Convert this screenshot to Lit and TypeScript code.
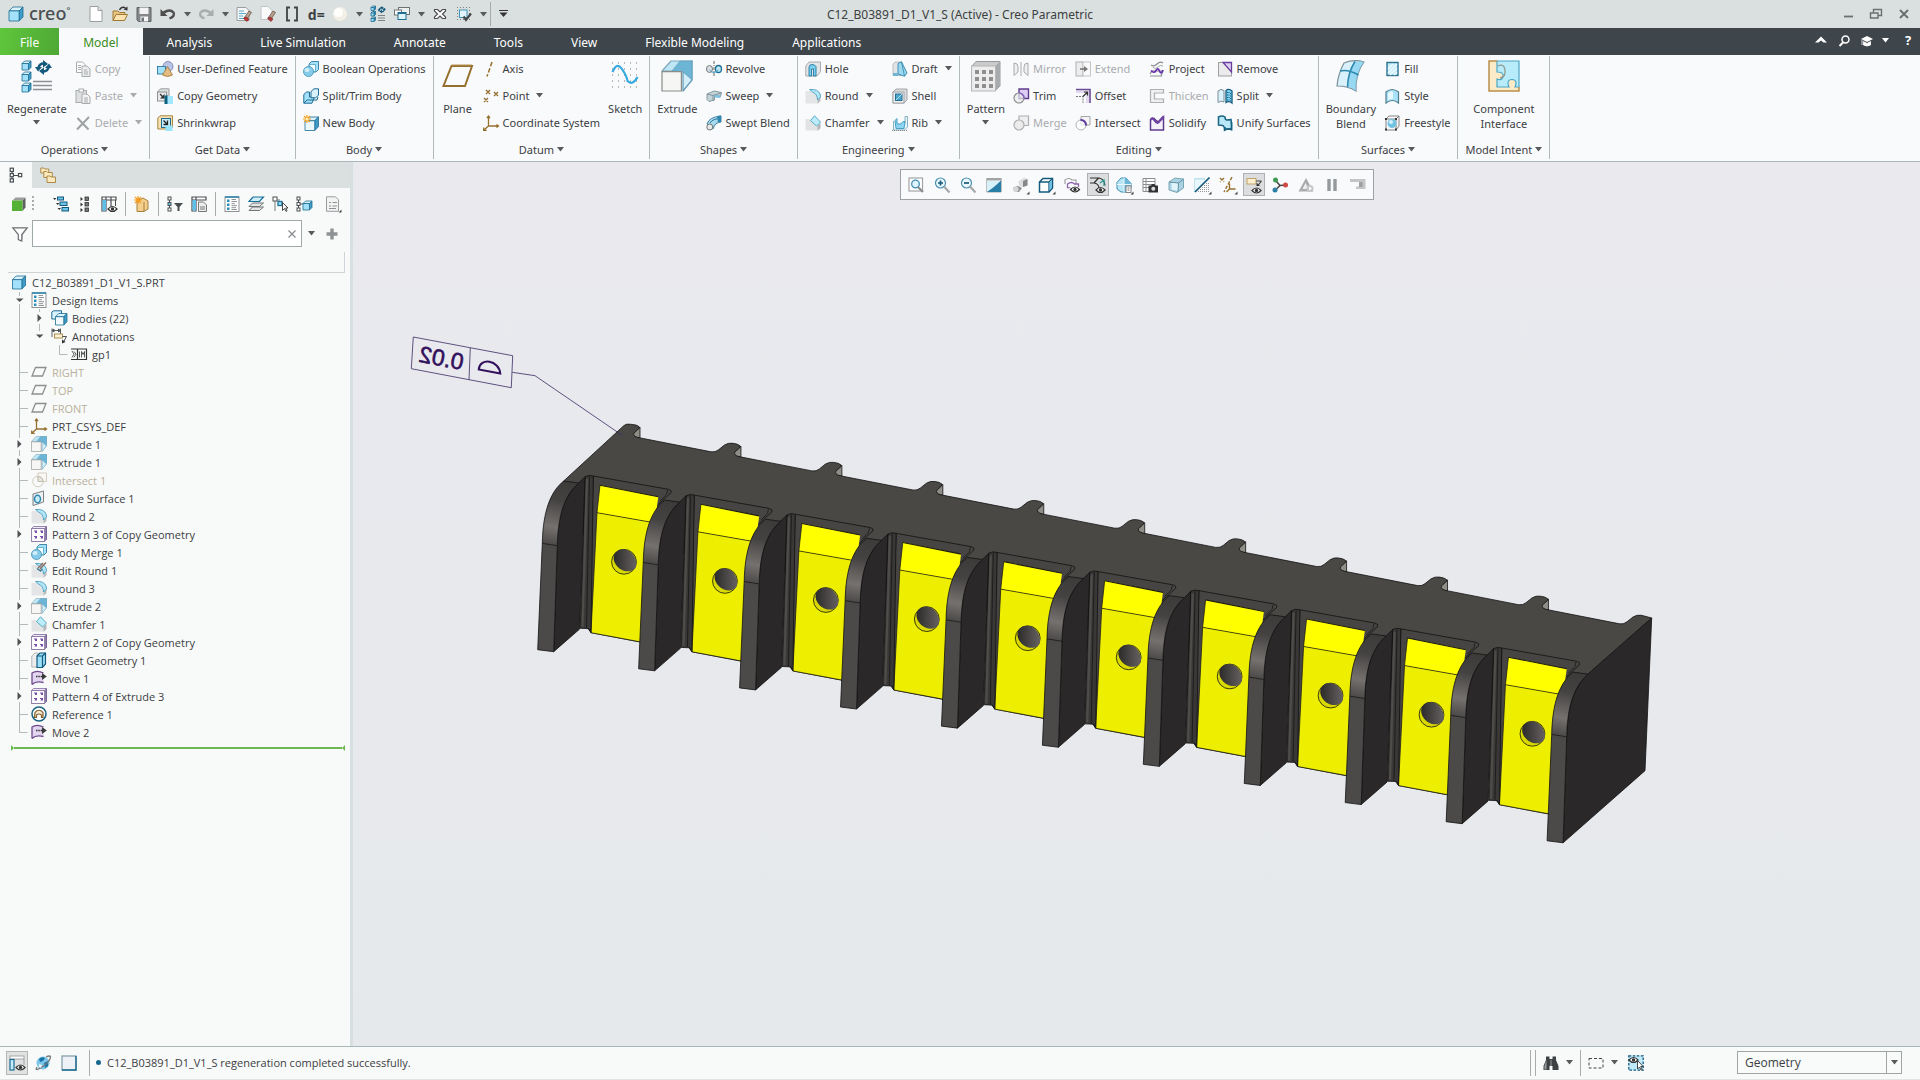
import { LitElement, html, svg, css, nothing, type TemplateResult, type SVGTemplateResult } from "lit";
import { customElement } from "lit/decorators.js";
import { classMap } from "lit/directives/class-map.js";

type Art = SVGTemplateResult;

/* ---------- icon palette ---------- */
const INK = "#4a4f52";
const EDGE = "#1c6c93";
const SKY = "#a3e0fa";
const PALE = "#d8f1fb";
const BROWN = "#96702e";

/** Small three-faced box seen from the front left. */
const box = (x: number, y: number, s: number, face = SKY, edge = EDGE, top = PALE, side = "#3f9cc6"): Art => {
  const d = Math.max(1.5, s * 0.28);
  return svg`<g stroke=${edge} stroke-width="0.8" stroke-linejoin="round">
    <path fill=${top} d="M${x} ${y + d}l${d} ${-d}h${s - d}l${-d} ${d}z"/>
    <path fill=${side} d="M${x + s - d} ${y + d}l${d} ${-d}v${s - d}l${-d} ${d}z"/>
    <rect fill=${face} x=${x} y=${y + d} width=${s - d} height=${s - d}/></g>`;
};

const eye = (x: number, y: number): Art => svg`<g transform="translate(${x} ${y})">
  <path d="M0 3q4.5-5 9 0q-4.5 5-9 0z" fill="#fff" stroke="#333" stroke-width="1.2"/><circle cx="4.5" cy="3" r="1.7" fill="#333"/></g>`;

const extrudeArt = (k: number): Art => svg`<g transform="scale(${k})" stroke-width="0.6" stroke-linejoin="round">
  <path d="M.5 5.5 5 .5h10.5L11 5.5z" fill="#bfe6f5" stroke="#7fa9ba"/>
  <path d="M11 5.5 15.500.5v9.5L11 15.5z" fill="#d3eef8" stroke="#5d9ab5"/>
  <path d="M5.5 5.500 9.500.5h6v9.500L11 6z" fill="#6db5d5" stroke="#5d9ab5" stroke-width=".3"/>
  <rect x=".5" y="5.8" width="9.7" height="9.7" fill="#f6f6f4" stroke="#8b8b88"/></g>`;

const roundArt = svg`<path d="M.5 3h6q6 1 6 8v4.500H.5z" fill="#e4e5e6"/>
  <path d="M12.500 9l3-3v7l-3 3z" fill="#b9bcbe"/>
  <path d="M4.500 1.500h4q7 1 7 7.500l-3 3q0-6-5-8z" fill="#b3e6f8" stroke="#3c99bd" stroke-width=".8"/>`;

const chamferArt = svg`<path d="M.5 4h4l8 7v4.500H.5z" fill="#e2e3e4"/><path d="M12.500 10.500l3-2.500v5l-3 3z" fill="#b2b5b7"/>
  <path d="M5.500 5.500 9.500.8l6 6.200-4 4z" fill="#bdecfb" stroke="#3c99bd" stroke-width=".8"/>`;

const patternArt = svg`<path d="M.5 2.500 2.500.5h13v13l-2 2" fill="#ece8f2" stroke="#9a86b5"/>
  <rect x=".6" y="2.5" width="13" height="13" fill="#fff" stroke="#85719f" stroke-width=".9"/>
  <path d="M15 .5v13.500" stroke="#6e568c" stroke-width="1.4"/>
  <g fill="#7a4fae"><rect x="3" y="4.5" width="3" height="2.5"/><rect x="9" y="4.5" width="3" height="2.5"/><rect x="3" y="10" width="3" height="2.5"/><rect x="9" y="10" width="3" height="2.5"/></g>
  <g fill="#fff"><rect x="3" y="5.5" width="1" height="1.5"/><rect x="9" y="5.5" width="1" height="1.5"/><rect x="3" y="11" width="1" height="1.5"/><rect x="9" y="11" width="1" height="1.5"/></g>`;

const csysArt = svg`<g fill="none" stroke=${BROWN} stroke-width="1.3"><path d="M5.500 1.500v9.500H15M5.500 11 1 15M4 3l1.500-2L7 3M13.500 9.500 15.500 11l-2 1.500M.7 12.500V15.300h3"/></g>`;

const mergeBodies = svg`<path d="M6 3 8.500.5h7v8L13 11H6z" fill=${SKY} stroke=${EDGE} stroke-width=".8"/><path d="M6.500 3.500h6V10.500h-6z" fill="#f4fbfe" stroke="#3c99bd" stroke-width=".7"/>
  <circle cx="5.5" cy="10.5" r="5" fill="#86cbe9" stroke="#3c8fb5" stroke-width=".8"/><ellipse cx="4" cy="9" rx="2.5" ry="2" fill="#d3eef9"/>`;

const listArt = svg`<rect x="1" y="1" width="14" height="14.5" fill="#fff" stroke="#8d9193"/><path d="M1 1h14" stroke="#2f86ad" stroke-width="1.6"/>
  <g fill="#2a8fbd"><rect x="3" y="3.5" width="2.5" height="2.5"/><rect x="3" y="7.5" width="2.5" height="2.5"/><rect x="3" y="11.5" width="2.5" height="2.5"/></g>
  <path d="M7.500 3.500H12M7.500 5.500H13M7.500 7.700H11M7.500 9.700H13M7.500 11.700H12M7.500 13.500H13" stroke="#85898b" stroke-width=".9"/>`;

const moveArt = svg`<path d="M1 3.500Q6 0 12.500 3.500V12Q6 10 1 14.500z" fill="#e3d5f0"/>
  <path d="M1 14.500V3Q6-.3 12.500 3M1 14.500Q5 10.500 12.500 12.500" fill="none" stroke="#6d4a8c" stroke-width="1.3"/>
  <path d="M5 6.500h6" stroke="#333" stroke-width="1.6" stroke-dasharray="1.5 .8"/><path d="M11 3 15.800 6.500 11 10z" fill="#3b3b3b"/>`;

const planeGrey = svg`<path d="M4.500 3.500h10.500L11.500 12H1z" fill="none" stroke="#8c8f90" stroke-width="1.3"/>`;

const swirl = (s: number, x: number, y: number): Art => svg`<g transform="translate(${x} ${y}) scale(${s})" fill="none" stroke="#15597d" stroke-width="2.6">
  <path d="M3.500 8A5 4.500 0 0 1 9 3.500M13.500 7A5 4.500 0 0 1 8 11.500"/><path d="M8 0 13 4 8 7.500zM9 15 4 11 9 7.500z" fill="#15597d" stroke="none"/><path d="M0 7h7L3 11.500zM17 8h-7L14 3.500z" fill="#15597d" stroke="none"/></g>`;

const I: Record<string, Art> = {
  /* quick access */
  new: svg`<path d="M2 .5h8l4 4v11H2z" fill="#fff" stroke="#9a9d9f"/><path d="M10 .5v4h4" fill="#dfe2e3" stroke="#9a9d9f"/>`,
  open: svg`<path d="M1 14.500V5h5l1.500 1.500H13V9" fill="#e9c583" stroke="#a07a35"/><path d="M1 14.500 4 8.500h11.500l-3 6z" fill="#fbe2ae" stroke="#a07a35"/><path d="M7.500 4q2-4 6-2" fill="none" stroke="#333" stroke-width="1.5"/><path d="M11.500 3.500 15.500 4.500V.5z" fill="#333"/>`,
  save: svg`<path d="M1 1.500h14v14H2.500L1 14z" fill="#85888a" stroke="#5e6163"/><rect x="3.5" y="1.5" width="9" height="6.5" fill="#f2f2f2"/><rect x="4.5" y="10.5" width="7.5" height="5" fill="#f7f7f7"/><rect x="5.5" y="11.5" width="2.5" height="4" fill="#707375"/>`,
  undo: svg`<path d="M2.500 7.500q7-5.500 11-1 2 3.500-4 6" fill="none" stroke="#4d4d4d" stroke-width="2.4"/><path d="M.5 3v7h7z" fill="#4d4d4d"/>`,
  redo: svg`<path d="M13.500 7.500q-7-5.500-11-1-2 3.500 4 6" fill="none" stroke="#a9adae" stroke-width="2.4"/><path d="M15.500 3v7h-7z" fill="#a9adae"/>`,
  regen: svg`<path d="M1 1.500h9l3 3v10H1z" fill="#f4f6f7" stroke="#9a9d9f"/><path d="M3 5h5M3 7.500h7M3 10h4M3 12.500h5" stroke="#5aa9cf" stroke-width="1.2"/><path d="M8 12 13 5l2.500 1.500L11 13z" fill="#b9a08e" stroke="#5d4a40" stroke-width=".7"/><path d="M7.500 12.500 11 15.500 13 13l-3-2z" fill="#c03636" stroke="#7d2020" stroke-width=".6"/>`,
  erase: svg`<path d="M1 .5h7l4 4v9H1z" fill="#fafafa" stroke="#c2c5c6"/><path d="M8 12 13 5l2.500 1.500L11 13z" fill="#b9a08e" stroke="#5d4a40" stroke-width=".7"/><path d="M7.500 12.500 11 15.500 13 13l-3-2z" fill="#b23a3a" stroke="#7d2020" stroke-width=".6"/>`,
  brackets: svg`<path d="M6 1.500H3v13h3M10 1.500h3v13h-3" fill="none" stroke="#3f4346" stroke-width="1.8"/>`,
  sphere: svg`<circle cx="8" cy="8" r="7" fill="#f2efe6"/><circle cx="6.5" cy="6.5" r="4.5" fill="#fffefa"/>`,
  regenTree: svg`${box(1, 0, 4.5)}${box(1, 5.5, 4.5)}${box(1, 11, 4.5)}${swirl(0.5, 7.5, 0)}<path d="M8 9.500h7M8 12h7M8 14.500h7" stroke="#7f8385"/>`,
  windows: svg`<rect x="4.5" y="1.5" width="11" height="7" fill="#eef0f0" stroke="#6f7375"/><rect x=".5" y="4" width="7" height="5" fill="#fff" stroke="#6f7375"/><rect x="4" y="6.5" width="8" height="7" fill="#dff3fb" stroke="#1c6c93"/><path d="M4 7h8" stroke="#1c6c93" stroke-width="2"/>`,
  closeWin: svg`<path d="M2.500 3.500h3L8 6l2.500-2.500h3v1.500L10.500 8l3 3v1.500h-3L8 10l-2.500 2.500h-3V11l3-3-3-3z" fill="#fff" stroke="#4c4f51" stroke-width="1.2"/>`,
  pick: svg`<path d="M1 1.500h15M1 4.500h15M1 7.500h15M1 10.500h15M1 13.500h15" stroke="#7d8183" stroke-dasharray="1 2"/><rect x="3.5" y="4" width="7.5" height="7.5" fill="#e2f5fd" stroke="#3d94b8"/><path d="M7.500 10.500 10 14l5-6.500" fill="none" stroke="#46494b" stroke-width="2.2"/>`,
  cube: box(1, 1, 14),
  /* ribbon, large */
  Regenerate: svg`${box(1, 1, 9)}${box(1, 12, 9)}${box(1, 23, 9)}${swirl(1, 14, 0)}<path d="M12 21.500h19M12 25.500h19M12 29.500h19" stroke="#8d9092" stroke-width="1.6"/>`,
  Plane: svg`<path d="M9.500 6h20.500L23 26H1.500z" fill="none" stroke=${BROWN} stroke-width="2"/><path d="M9.500 5h20.500" stroke="#b59252"/>`,
  Sketch: svg`<g stroke="#777" stroke-width="1" stroke-dasharray="1 5"><path d="M3 3h26M3 9h26M3 15h26M3 21h26M3 27h26"/></g><path d="M3.500 12Q8 1.500 13 9t5.500 12q5 5 10-4" fill="none" stroke="#33a9df" stroke-width="2.2"/>`,
  Extrude: extrudeArt(2),
  Pattern: svg`<path d="M2 6 6 1.500h24V26l-5 5" fill="#c9cbcc" stroke="#999"/><path d="M25.500 6 30 1.500V26l-4.500 5z" fill="#a8abad"/><rect x="1.5" y="6" width="24" height="25" fill="#ececec" stroke="#b5b5b5"/>
    <g fill="#8d8f90">${[5, 12, 19].map((x) => [10, 17, 24].map((y) => svg`<rect x=${x} y=${y} width="4" height="4"/>`))}</g>`,
  "Boundary Blend": svg`<path d="M9 3q10-4 20-1-9 12-8 29-8-5-19-5Q3 14 9 3z" fill=${PALE} stroke="#7b8f98" stroke-width="1.2"/><path d="M20 1.500q5-.5 9 .5-9 12-8 29-4-3-8-4 0-15 7-25.500z" fill="#7fcdee" opacity=".7"/><path d="M20 1.500Q13 12 12.500 27M5 11q8-2 18.500 4" fill="none" stroke="#2a87ae" stroke-width="1.5"/>`,
  "Component Interface": svg`<path d="M1 1h30v30H1z" fill="#fdeac6"/><path d="M9 1h22v26h-4q1-2 1-4a4 3.500 0 0 0-8 0q0 2 1 4H9v-8q5 2 6-2.500T9 12z" fill="#b8ecfa" stroke="#4aa6c7" stroke-width="1.2"/><path d="M9 1H1v30h30v-4" fill="none" stroke="#b98f4c" stroke-width="1.5"/><path d="M10 6q6-3 7 4t-5 8" fill="none" stroke="#8f9a8c" stroke-width="1.3"/>`,
  /* ribbon, small */
  Copy: svg`<g fill="#fff" stroke="#a7abac"><path d="M1.500 1h6l2.500 2.500v8H1.500z"/><path d="M7 5h5l3 3v7.500H7z" fill="#eceeee"/><path d="M9 9h3M9 11h4M9 13h4M3 4.500h3M3 6.500h3M3 8.500h3"/></g>`,
  Paste: svg`<rect x="1" y="2.5" width="10.5" height="12" fill="#dfe1e1" stroke="#a7abac"/><rect x="4" y="1" width="4.5" height="3" fill="#fff" stroke="#a7abac"/><path d="M7 6h5l3 3v6.500H7z" fill="#f4f4f4" stroke="#a7abac"/><path d="M9 10h4M9 12h4M9 14h4" stroke="#a7abac"/>`,
  Delete: svg`<path d="M2.500 3 13.500 14.500M14 2 2 14.500" stroke="#9fa2a3" stroke-width="2"/>`,
  "User-Defined Feature": svg`<circle cx="11" cy="5.5" r="5" fill="#b9c4e4" stroke="#6b79a8" stroke-width=".8"/><rect x=".5" y="5.5" width="8" height="7.5" fill=${SKY} stroke=${EDGE} stroke-width=".8"/><path d="M10.500 5.500 15.500 14q-5 3-10 0z" fill="#e5bd83" stroke="#9c7132" stroke-width=".8"/>`,
  "Copy Geometry": svg`<path d="M.5 4 3.500.8H12V9" fill="#dcdfe0" stroke="#9b9ea0"/><rect x=".5" y="4" width="9" height="9" fill="#e8eaeb" stroke="#8e9193"/><path d="M7.500 6v4.500H3z" fill="#333"/><path d="M3 6l4 4" stroke="#333" stroke-width="1.3"/><rect x="7.5" y="7.5" width="3.5" height="8.5" fill="#0f5f80"/><rect x="10.5" y="8" width="5.5" height="8" fill="#a3e8ff"/>`,
  Shrinkwrap: svg`<path d="M.8 3 3 .8h12.500V12l-2 2H.8z" fill="#f8e2b0" stroke="#9c7d3a" stroke-width=".9"/><rect x="4.5" y="3.5" width="9" height="9" fill="#c8ebfa" stroke=${EDGE}/><path d="M6.500 5.500l4 4m0-4v4h-4" fill="none" stroke="#222" stroke-width="1.3"/><rect x="8.5" y="10.5" width="7" height="5.5" fill="#9be4ff"/>`,
  "Boolean Operations": mergeBodies,
  "Split/Trim Body": svg`<path d="M.8 6.500 3.500 4h3v5h5l-2.500 6.200H.8z" fill=${SKY} stroke=${EDGE}/><path d="M8 3.500 11 .8h4.500v6.500l-3 2.500H8z" fill="#d9f1fb" stroke=${EDGE}/><path d="M1 15l3-3h10l1-3" fill="none" stroke=${EDGE}/>`,
  "New Body": svg`${box(2, 2, 13.5, "#eaf8fe")}<path d="M4 0v8M0 4h8M1 1l6 6M7 1 1 7" stroke="#f39a1f" stroke-width="1.2"/><circle cx="4" cy="4" r="1.5" fill="#fff2b0"/>`,
  Axis: svg`<path d="M9 1 4 15.500" stroke=${BROWN} stroke-width="1.5" stroke-dasharray="4.5 2"/>`,
  Point: svg`<g stroke=${BROWN} stroke-width="1.4"><path d="M3 2l4 4M7 2 3 6M11 4l4 4M15 4l-4 4M1 10l4 4M5 10l-4 4"/></g>`,
  "Coordinate System": csysArt,
  Revolve: svg`<path d="M8 0v16" stroke="#666" stroke-dasharray="3 1 1 1"/><ellipse cx="3.5" cy="8" rx="3" ry="3.5" fill="#d9dfe2" stroke="#777"/><ellipse cx="12.5" cy="8" rx="3" ry="3.5" fill="#bfe9f9" stroke=${EDGE} stroke-width="1.3"/><path d="M3.500 9q4 5 9 0" fill="none" stroke="#3c99bd"/>`,
  Sweep: svg`<path d="M1 6 8 3l7.500 1.500-1 4-6-1.500V12L3 13.500l-2-2z" fill="#c5d2d8" stroke="#6f868f" stroke-width=".8"/><path d="M1 6l6 1.500L15 5M7 7.500V13" fill="none" stroke="#6f868f" stroke-width=".8"/><path d="M8 7l6 .5.500 2.500-6-.5z" fill="#7fc3de"/>`,
  "Swept Blend": svg`<path d="M1 9Q3 2 15 1v6q-6 0-8 7z" fill="#a8daee" stroke="#2f7797" stroke-width=".9"/><path d="M4 8q3-5 11-4" fill="none" stroke="#2f7797"/><circle cx="3.8" cy="12" r="3" fill="#e9e9e9" stroke="#777"/><path d="M11 1l4-.5V7l-3 .5z" fill="#2f86ad"/>`,
  Hole: svg`<path d="M.8 5 4 1h11.500v9.500L12 15H.8z" fill="#e3e5e6" stroke="#a1a4a6" stroke-width=".9"/><path d="M4 15V6.500q0-3 3-3t4 2V15H8.500V8H6.500v7z" fill="#7fd0ef" stroke="#207aa0" stroke-width=".9"/>`,
  Round: roundArt,
  Chamfer: chamferArt,
  Draft: svg`<path d="M1 3.500 3 1h6v13.500H1z" fill="#e2e4e5" stroke="#b0b3b5" stroke-width=".8"/><path d="M6 2.500 9.500.8 15 12l-2.500 3.200L6 13z" fill="#9ed8ef" stroke="#2f86ad" stroke-width=".9"/><path d="M9.500.8 12.500 15.200" stroke="#2f86ad" stroke-width=".8"/><path d="M1 12h5v3H1z" fill="#6fb5d3"/>`,
  Shell: svg`<path d="M1 4 4 1h11v11l-3 3H1z" fill="#d9dbdc" stroke="#9b9ea0" stroke-width=".9"/><rect x="1" y="4" width="11" height="11" fill="#efefef" stroke="#9b9ea0" stroke-width=".9"/><rect x="3.5" y="6" width="6.5" height="6.5" fill="#4ca6cc" stroke="#256e90"/><path d="M4 12l6-6" stroke="#a8def2"/>`,
  Rib: svg`<path d="M1.500 6V15h11l3-3V1.500H13v7" fill="#e7f3f8" stroke="#7da9bb" stroke-width=".9"/><path d="M3 5.500l2-2V9h4l2-2.500h2l-1 7H4z" fill="#8fd6f2" stroke="#3c99bd" stroke-width=".9"/><path d="M0 15.500h16" stroke="#888" stroke-dasharray="1 1"/>`,
  Mirror: svg`<g fill="#f0f0f0" stroke="#a7abac"><path d="M1 2q4 0 4 4v5L1 14.500zM15 2q-4 0-4 4v5l4 3.500z"/></g><path d="M8 1v14" stroke="#a7abac"/>`,
  Trim: svg`<path d="M6 1h9.500v9.500H6z" fill="#dccff3" stroke="#5f3c8b" stroke-width="1.4"/><circle cx="6" cy="10" r="5" fill="#e9e9ea" fill-opacity=".7" stroke="#8d8f92" stroke-width="1.2"/><path d="M6 5a5 5 0 0 1 5 5" fill="none" stroke="#8b62c0" stroke-width="1.6"/>`,
  Merge: svg`<path d="M6 1h9.500v9.500H6z" fill="#efefef" stroke="#adb0b1" stroke-width="1.2"/><circle cx="6" cy="10" r="5" fill="#ececec" stroke="#adb0b1" stroke-width="1.2"/>`,
  Extend: svg`<rect x="1" y="1" width="7" height="14" fill="#ededed" stroke="#adb0b1"/><rect x="8" y="1" width="7.5" height="14" fill="#fafafa" stroke="#c3c5c6"/><path d="M5 8h5" stroke="#777" stroke-width="1.6"/><path d="M9 5l4 3-4 3z" fill="#777"/>`,
  Offset: svg`<path d="M1 2.500h13V15h-3L11 5H1z" fill="#e2d8ef"/><path d="M1 1.500h14V15" fill="none" stroke="#6b4b93" stroke-width="1.6"/><path d="M1 8.500h7V15" fill="none" stroke="#777" stroke-dasharray="2 1"/><path d="M8 8.500 12 4.500M9 4h3.500v3.500" fill="none" stroke="#333" stroke-width="1.2"/>`,
  Intersect: svg`<path d="M6 1.500h9V10H6z" fill="#f4f4f5" stroke="#a5a7a9"/><circle cx="6" cy="10" r="5" fill="#fff" fill-opacity=".7" stroke="#b3b5b7"/><path d="M5.500 5a5 5 0 0 1 5.500 5.500" fill="none" stroke="#5f3c9b" stroke-width="2"/>`,
  Project: svg`<path d="M2 4q3 2 6-1t6-1M1 15h12M1 13l2-3h11l-2 5" fill="none" stroke="#8d8f92" stroke-width="1.2"/><path d="M2 9.500Q5 13 7 9.500T10.500 10 14 9" fill="none" stroke="#6a32ad" stroke-width="1.7"/><path d="M4 6.500q3 2 5-.5t5-1" fill="none" stroke="#a5a7a9"/>`,
  Thicken: svg`<path d="M1.500 1.500h13v3.500H5.500v6h9v3.500h-13z" fill="#f1f1f1" stroke="#adb0b1" stroke-width="1.2"/>`,
  Solidify: svg`<path d="M1.500 15V5q2-4 5 0t8-3v13z" fill="#f5f1fa" stroke="#5f3c8b" stroke-width="1.5"/><path d="M1.500 5q2-3 4.500 1t5-.5l3.500-4" fill="none" stroke="#6f43a3" stroke-width="2.2"/>`,
  Remove: svg`<rect x="1.5" y="1.5" width="13" height="13.5" fill="#ebebec" stroke="#9d9fa1"/><path d="M6 1.500h8.500V11z" fill="#dccff3" stroke="#6a3d9a" stroke-width="1.3"/>`,
  Split: svg`<path d="M1 3q3-3 6-.5V14q-3-2-6 .5z" fill="#d9f1fa" stroke="#7b8f98"/><path d="M9 2.500q3-2.500 6 .5v12q-3-2.500-6-.5z" fill="#7dd4f2" stroke="#15597d" stroke-width="1.3"/><path d="M10.500 4v9M12 4v9M13.500 5v9" stroke="#15597d" stroke-dasharray="1 1.5"/>`,
  "Unify Surfaces": svg`<path d="M1.500 2Q5 0 8 2q0 3 2 3t4-.5q1 5 .5 10-4-1-7 .5 0-4-2-4.500T1.500 10z" fill="#b8e8f8" stroke="#17627f" stroke-width="1.5"/><path d="M8 12v3q3-2 6.500-.5V7" fill="none" stroke="#17627f" stroke-width="1.5"/>`,
  Fill: svg`<rect x="3" y="1.5" width="11" height="13" fill="#c4ecfa" stroke="#2a708f" stroke-width="1.4"/><path d="M4 8l5-5M4 12l9-9M6 14l7-7M10 14l3-3" stroke="#f3fcff" stroke-width="1.3"/>`,
  Style: svg`<path d="M2 4q6-5 12.500 0v11q-6-5-12.500 0z" fill="#a8e2f8" stroke="#517b8b" stroke-width="1.2"/><path d="M4 5q4-3 5-1v7q-3 0-5 1z" fill="#e6f8fe"/>`,
  Freestyle: svg`<path d="M2 4 5 1h10v10l-3 4H2zM2 4h10v11M12 4l3-3" fill="none" stroke="#777" stroke-width=".9"/><circle cx="8" cy="8.5" r="4.5" fill="#72c3e2"/><circle cx="7" cy="7" r="2" fill="#d6f1fb"/><g fill="#333"><rect x="1" y="3" width="2" height="2"/><rect x="11" y="3" width="2" height="2"/><rect x="1" y="13.5" width="2" height="2"/><rect x="11" y="13.5" width="2" height="2"/></g>`,
  /* tree panel */
  treeTab: svg`<g fill="#fff" stroke=${INK} stroke-width="1.2"><path d="M4 4v2.500M4 10v2M6 8.500h4.500M12.500 8h1"/><rect x="2.2" y="1.2" width="3.2" height="3.2"/><rect x="2.2" y="6.5" width="3.2" height="3.2"/><rect x="2.2" y="11.8" width="3.2" height="3.2"/><rect x="10.5" y="6.5" width="3.2" height="3.2"/></g>`,
  folders: svg`<g fill="#fce9be" stroke="#a67f3d" stroke-width=".9"><path d="M.8 1h3l1 1h4v4h-8z"/><path d="M3.800 4.500h3l1 1h4.500v5H3.800z"/><path d="M7 9h3l1 1h4.500v5.500H7z"/></g>`,
  greenCube: svg`<path d="M1.500 4.500 4.500 1.500H14.500l-3 3z" fill="#9b9d9e"/><path d="M11.500 4.500l3-3v10l-3 3.500z" fill="#5e6162"/><rect x="1" y="4.5" width="10.5" height="10.5" fill="#55b036"/>`,
  collapse: svg`<g fill="#6cc4ea" stroke="#15597d"><rect x="4.5" y="1" width="6" height="3"/><rect x="7" y="6" width="7" height="3.5"/><rect x="9" y="11.5" width="6.5" height="3.5"/></g><path d="M0 2h3.500L1.700 4zM3 7h3.500L4.700 9zM4.500 12H8l-1.700 2z" fill="#333"/>`,
  expand: svg`<g fill="#777" stroke="#333" stroke-width=".8"><rect x="8" y="1" width="3.5" height="3.5"/><rect x="8" y="6.5" width="3.5" height="3.5"/><rect x="8" y="12" width="3.5" height="3.5"/></g><path d="M3.500 1v4l2.500-2zM3.500 6.500v4l2.500-2zM3.500 12v4L6 14z" fill="#333"/>`,
  columns: svg`<path d="M1 1h14v3H1zM1 4v11h4V1M10 1v10" fill="#fff" stroke=${INK} stroke-width="1.2"/><path d="M14.500 4v6" stroke=${INK}/><rect x="1.5" y="4" width="3.5" height="10.5" fill="#5fbfe8"/>${eye(7, 10)}`,
  star: svg`<path d="M3 5l6-3 5 3v8l-4 2.500H3z" fill="#f4cf8b" stroke="#a67f3d"/><path d="M10 6v9" stroke="#a67f3d"/><path d="M4 0v8M0 4h8M1 1l6 6M7 1 1 7" stroke="#f39a1f" stroke-width="1.2"/>`,
  treeFilter: svg`<g fill="#fff" stroke=${INK}><path d="M2.500 4v8"/><rect x="1" y="1" width="3" height="3"/><rect x="1" y="6.5" width="3" height="3" fill="#6cc4ea"/><rect x="1" y="12" width="3" height="3"/></g><path d="M7 7h9l-3.500 4v4h-2v-4z" fill="#4a4d4f"/>`,
  columnDoc: svg`<path d="M1 1h14v3H1zM1 4v11h4V1" fill="#fff" stroke=${INK} stroke-width="1.2"/><rect x="1.5" y="4" width="3.5" height="10.5" fill="#5fbfe8"/><path d="M7.500 6h5l3 3v6.500h-8z" fill="#eceeee" stroke="#777"/><path d="M9 11h5M9 13h5" stroke="#777"/>`,
  list: listArt,
  layers: svg`<path d="M1 14.500 4.500 11H15.500l-4 3.500zM1 10.500 4.500 7H15.500l-4 3.500z" fill="#e4e5e6" stroke="#6f7375"/><path d="M1 5.500 5 1h10.500l-4 4.500z" fill="#cdeefa" stroke="#1b7099" stroke-width="1.2"/>`,
  treePick: svg`<path d="M3 4v11M5 4h3M8 5.500v3" stroke="#777" fill="none"/><rect x="1" y="1" width="4" height="4" fill="#fff" stroke=${INK}/><rect x="6" y="5.5" width="4" height="4" fill="#9fe0fa" stroke="#1b7099" stroke-width="1.3"/><path d="M10.500 6.500v8l2-2 1.600 3 1-.8-1.400-2.700h2.300z" fill="#fff" stroke="#333" stroke-width=".9"/>`,
  treeBody: svg`<g fill="#fff" stroke=${INK}><path d="M2.500 4v8M4 8h3"/><rect x="1" y="1" width="3" height="3"/><rect x="1" y="6.5" width="3" height="3"/><rect x="1" y="12" width="3" height="3"/></g>${box(7, 5, 9)}`,
  report: svg`<path d="M1.500.8h9l3 3v11.500h-12z" fill="#f2f3f3" stroke="#9a9d9f"/><path d="M4 6.500h2M4 10h2M7.500 6.500H12M7.500 10H12M4 12.500h7" stroke="#8e9193" stroke-width="1.2"/><path d="M16.500 13.500v3h-3z" fill="#444"/>`,
  funnel: svg`<path d="M.8 1.800h14.400L9.800 8.500V15l-3.500-1.500v-5z" fill="#fff" stroke="#6b6f71" stroke-width="1.2"/><path d="M9.800 8.500 15 2v1L10.500 9v6z" fill="#7c8082"/>`,
  plus: svg`<path d="M8 2.500v11M2.500 8h11" stroke="#8f9294" stroke-width="3.4"/>`,
  /* tree rows */
  part: box(1.5, 2, 13),
  bodies: svg`<path d="M.8 2 2.500.8h8V9H.8z" fill=${PALE} stroke=${EDGE}/>${box(4.5, 3.5, 11.5, "#f4fbfe")}`,
  annotations: svg`<path d="M1 .5V9M9.500.5V6M1 2.500h8.500M1 2.500l2-1.500v3zM9.500 2.500l-2-1.500v3z" fill=${INK} stroke=${INK} stroke-width=".9"/><rect x="3.5" y="6" width="8" height="4" fill="#fdf3d4" stroke="#99762f" stroke-width=".8"/><path d="M11.500 8.500h4L12.500 14" fill="none" stroke=${INK}/><path d="M11 11.500v4l3.500-1.500z" fill="#333"/>`,
  gtol: svg`<path d="M0 3h16M0 13.500h16M6.500 3v10.500M15.500 3v10.500" stroke="#333" stroke-width="1.2"/><path d="M1 5l2 3.200L1 11.500M3 5.500l2 2.700-2 3M8.500 5.500v6M10.500 11.500v-6l1.500 3 1.500-3v6" fill="none" stroke="#333" stroke-width=".8"/>`,
  plane: planeGrey,
  csys: csysArt,
  extrude: extrudeArt(1),
  intersectOff: svg`<g opacity=".55"><path d="M7 1h8.500v8.500H7z" fill="#fbf8f1" stroke="#b5a98b"/><circle cx="7" cy="9.5" r="5.3" fill="none" stroke="#b5a98b"/><path d="M7 4.500a5 5 0 0 1 5 5H7z" fill="#d9d3c5" stroke="#9a917c"/></g>`,
  divide: svg`<path d="M2 4 12.500 1v11L2 15.500z" fill="#eef1f2" stroke="#7c8082"/><ellipse cx="6.5" cy="9" rx="3" ry="3.7" fill="#c9edf9" stroke="#2a87ae" stroke-width="1.5"/>`,
  round: roundArt,
  editRound: svg`${roundArt}<path d="M7 6 12 1M9 7l6-6.500" stroke="#8a6a5c" stroke-width="1.3"/><path d="M6 6.500 9.500 9l1.500-1.500" fill="none" stroke="#2a6e8c" stroke-width="1.2"/>`,
  pattern: patternArt,
  merge: mergeBodies,
  chamfer: chamferArt,
  offsetGeo: svg`<path d="M.8 4 4 1h3v14H.8z" fill="#eceded" stroke="#b3b5b7"/><path d="M6 4 9 1h5.500v11l-3 3.500H6z" fill="#9be0f8" stroke="#15597d" stroke-width="1.2"/><path d="M6 4h5.500v11.500M11.500 4l3-3" fill="none" stroke="#15597d" stroke-width="1.2"/>`,
  move: moveArt,
  reference: svg`<circle cx="8" cy="8" r="7" fill="#fff" stroke="#17627f" stroke-width="1.5"/><path d="M4 6.500Q8 2 12 6.500V11.500H10.500V9Q8 7 5.500 9V11.500H3.500z" fill="#f7ead2" stroke="#82622c" stroke-width="1.2"/>`,
  /* graphics toolbar */
  zoomFit: svg`<rect x="1" y="1" width="13.5" height="13" fill="#fff" stroke="#a1a4a6" stroke-width="1.2"/><circle cx="7.5" cy="7" r="3.8" fill="#dff4fd" stroke="#3b8db1" stroke-width="1.3"/><path d="M10 10l5 5" stroke="#8b8e90" stroke-width="2.2"/>`,
  zoomIn: svg`<circle cx="6.5" cy="6" r="5" fill="#eaf8fe" stroke="#4c8fae" stroke-width="1.2"/><path d="M6.500 3.500v5M4 6h5" stroke="#15597d" stroke-width="1.7"/><path d="M10 9.500l5.500 6" stroke="#a5a8aa" stroke-width="2.2"/>`,
  zoomOut: svg`<circle cx="6.5" cy="6" r="5" fill="#eaf8fe" stroke="#4c8fae" stroke-width="1.2"/><path d="M4 6h5" stroke="#15597d" stroke-width="1.7"/><path d="M10 9.500l5.500 6" stroke="#a5a8aa" stroke-width="2.2"/>`,
  repaint: svg`<path d="M.8 1.500h14.400v13.500H.8z" fill="#fff" stroke="#a1a4a6"/><path d="M.8 1.500h14.400v2H.8z" fill="#a1a4a6"/><path d="M1 15Q6 11 15 3.500V15z" fill="#2a7fa8"/><path d="M1 4h13Q9 10 1 14.500z" fill="#d7f0fa"/>`,
  shade: svg`<path d="M6.500 4 12 .8l3.500 1v6.500L11 10l-4-1z" fill="#dcdddf"/><path d="M11 4l4.500-2v6.500L11 10z" fill="#85888a"/><path d="M1 10.500 6 9l4 2-3 4H3z" fill="#8f9294"/><circle cx="3.8" cy="12.2" r="2.8" fill="#d4d6d7"/>`,
  display: svg`<path d="M1.500 5 5 1.500h9.500v9.500L11 15H1.500z" fill="#fff" stroke="#15597d" stroke-width="1.5"/><path d="M1.500 5H11v10M11 5l3.500-3.500" fill="none" stroke="#15597d" stroke-width="1.3"/><path d="M11.500 5.500 14 3v7.500l-2.500 3z" fill="#6cbfe3"/>`,
  simplify: svg`<path d="M1 7V3q4-3 7 0h4v4" fill="none" stroke="#9a9d9f" stroke-width="1.2"/><path d="M3.500 11V7q4-3 7 0h4v3" fill="none" stroke="#8b62b0" stroke-width="1.3"/><path d="M3.500 11q2-1 3 0" fill="none" stroke="#8b62b0"/>${eye(6.5, 9.5)}`,
  hidden: svg`<path d="M0 1h9q5.500 1 6 7.500M0 6h4q4.500.5 5 5M4 6l4.500-5" fill="none" stroke="#333" stroke-width="1.2"/><path d="M10 6l4-3v6" stroke="#2a9a9a" fill="none" stroke-width="1.2"/>${eye(6, 10)}`,
  views: svg`<path d="M1 5.500 5 1h5l5 5.500v5L10.500 15H5l-4-3z" fill="#b9e5f5" stroke="#3c8fb5"/><path d="M8 1v14h2.500l4.500-3.500V6L10 1z" fill="#6db8d8"/><path d="M1 7.500h14M8 1v14" stroke="#eaf7fc"/><rect x="10" y="9" width="5" height="6.5" fill="#fff" stroke="#777" stroke-width=".9"/><path d="M11.500 11h2M11.500 13h2" stroke="#777"/>`,
  capture: svg`<path d="M1 1.500h12v13H1zM1 4.500h12M1 7.500h12M1 10.500h12M4 1.500v13" fill="#fff" stroke="#8b8e90"/><path d="M6.500 8.500H9l1-1.500h2.500l1 1.500H16v7H6.500z" fill="#333"/><circle cx="11.3" cy="11.8" r="2" fill="#d9dadb"/>`,
  perspective: svg`<path d="M1 5 7 1l8.500 1v9L9 15.500 1 13z" fill="#a9d2e2" stroke="#7ea6b5"/><path d="M3.500 4.500l7 1.500v8l-7-1.500z" fill="#e1f4fb"/><path d="M1 5l9.500 1L15.500 2M10.500 6l-.5 9" fill="none" stroke="#5b8da1"/>`,
  section: svg`<path d="M1 15V2h10" fill="none" stroke="#a9d8ea" stroke-width="1.3"/><path d="M1 14V2.500h11z" fill="#e8f7fc"/><path d="M15.500.5 1 15" stroke="#15597d" stroke-width="1.7"/><path d="M4 14.500h11M6 12.500h9M8 10.500h7M10 8.500h5M12 6.500h3" stroke="#999" stroke-dasharray="1 1"/>`,
  datum: svg`<g fill="none" stroke=${BROWN} stroke-width="1.4"><path d="M0 1l4 4M4 1 0 5M12 0 4 15" stroke-dasharray="3.5 1.5"/><path d="M9.500 6.500v5.500h6M9.500 12 6.500 15"/></g>`,
  annotate: svg`<rect x="1" y="1.5" width="9" height="5.5" fill="#fbefd0" stroke="#bda268"/><path d="M10 4h5.500M15.500 4 11.500 9" fill="none" stroke="#444" stroke-width="1.2"/><path d="M10.500 5.500v3.500H14z" fill="#333"/>${eye(6, 10.5)}`,
  spin: svg`<path d="M4 4l4 4.500 6-.5M8 8.500 3.500 13" stroke="#444" stroke-width="1.5" fill="none"/><circle cx="3.5" cy="3" r="2.5" fill="#3f9c52"/><circle cx="13.5" cy="8" r="2.5" fill="#cf4a44"/><circle cx="3" cy="13" r="2.5" fill="#2d7fa8"/>`,
  warn: svg`<path d="M8 1 15.500 14.500H.5z" fill="#a9acae"/><path d="M7.500 6l3 6h-6z" fill="#eeefef"/><circle cx="12" cy="11.5" r="3.5" fill="#c4c6c8"/><path d="M11 9.500v4l3-2z" fill="#fff"/>`,
  pause: svg`<path d="M5 2v12M11 2v12" stroke="#96999b" stroke-width="3.4"/>`,
  present: svg`<path d="M0 2h15.500v10H6v-2.500h3V5H0z" fill="#c3c5c7"/><path d="M9 5h3.500v5H9z" fill="#9da0a2"/>`,
  /* status bar */
  paneEye: svg`<rect x="1" y="1" width="14" height="3" fill="#fff" stroke="#a1a4a6"/><rect x="1" y="4.5" width="4" height="10.5" fill="#c4ecfa" stroke="#1c6c93" stroke-width="1.2"/><path d="M15 4v6" stroke="#a1a4a6"/>${eye(7, 9.5)}`,
  globe: svg`<circle cx="8" cy="8" r="6.5" fill="#7cc4e8"/><path d="M4 4q3-3 6-1l-2 3-3 1zM9 8l4-2v5l-3 2z" fill="#1b74a8"/><path d="M2 12Q-1 17 7 12T15.500 2Q15 0 11 2" fill="none" stroke="#777a7c" stroke-width="1.3"/><path d="M4 9l3 1-1 3-2-1z" fill="#e8f6fd"/>`,
  blankWin: svg`<rect x="1" y="1" width="14" height="14" fill="#eef2f6" stroke="#7d98a6" stroke-width="1.2"/><path d="M1 15h14V1" fill="none" stroke="#1c6c93" stroke-width="1.4"/>`,
  binoculars: svg`<path d="M3 1.500h3.500V4h3V1.500H13V5l2.500 6v4h-6v-4h-3v4h-6v-4L3 5z" fill="#3f4244"/><path d="M3.500 5 1.500 11v3.500h2V9z" fill="#9c9fa1"/><path d="M8 5v6" stroke="#999"/>`,
  dashBox: svg`<rect x="1" y="3.5" width="14" height="9.5" fill="none" stroke="#444" stroke-dasharray="3 2"/>`,
  pickEye: svg`<rect x=".8" y=".8" width="14.4" height="14.4" fill="#bfeaf9" stroke="#15597d" stroke-width="1.3" stroke-dasharray="2.5 1.5"/>${eye(1, 2)}<path d="M9.500 5.500v8.500l2-2 1.500 3 1.200-.6-1.500-2.900h2.500z" fill="#fff" stroke="#333" stroke-width=".9"/>`,
};

const icon = (name: string, size = 16) =>
  html`<svg class="ico" width=${size} height=${size} viewBox="0 0 ${size} ${size}" aria-hidden="true">${I[name]}</svg>`;
const arrow = html`<svg class="arrow" width="7" height="5" viewBox="0 0 7 5" aria-hidden="true"><path d="M0 0h7L3.500 4.500z" fill="currentColor"/></svg>`;

const base = css`
  * { box-sizing: border-box; }
  :host { font: 11px/15px "Noto Sans", "Open Sans", sans-serif; color: #3c4043; }
  button { font: inherit; color: inherit; background: none; border: 0; padding: 0; margin: 0; display: flex; align-items: center; justify-content: center; }
  .ico { flex: none; display: block; overflow: visible; }
  .arrow { flex: none; display: block; color: #565a5d; }
  .off { color: #a9acae; }
  .off .arrow { color: #a9acae; }
`;

/* ---------- ribbon ---------- */
interface Command { t: string; menu?: boolean; off?: boolean; }
interface Large { big: string[]; menu?: boolean; }
type Column = Large | Command[];
interface Group { label: string; cols: Column[]; }

const c = (t: string, menu = false, off = false): Command => ({ t, menu, off });
const RIBBON: Group[] = [
  { label: "Operations", cols: [{ big: ["Regenerate"], menu: true }, [c("Copy", false, true), c("Paste", true, true), c("Delete", true, true)]] },
  { label: "Get Data", cols: [[c("User-Defined Feature"), c("Copy Geometry"), c("Shrinkwrap")]] },
  { label: "Body", cols: [[c("Boolean Operations"), c("Split/Trim Body"), c("New Body")]] },
  { label: "Datum", cols: [{ big: ["Plane"] }, [c("Axis"), c("Point", true), c("Coordinate System")], { big: ["Sketch"] }] },
  { label: "Shapes", cols: [{ big: ["Extrude"] }, [c("Revolve"), c("Sweep", true), c("Swept Blend")]] },
  { label: "Engineering", cols: [[c("Hole"), c("Round", true), c("Chamfer", true)], [c("Draft", true), c("Shell"), c("Rib", true)]] },
  {
    label: "Editing", cols: [{ big: ["Pattern"], menu: true },
      [c("Mirror", false, true), c("Trim"), c("Merge", false, true)],
      [c("Extend", false, true), c("Offset"), c("Intersect")],
      [c("Project"), c("Thicken", false, true), c("Solidify")],
      [c("Remove"), c("Split", true), c("Unify Surfaces")]],
  },
  { label: "Surfaces", cols: [{ big: ["Boundary", "Blend"] }, [c("Fill"), c("Style"), c("Freestyle")]] },
  { label: "Model Intent", cols: [{ big: ["Component", "Interface"] }] },
];

@customElement("cad-ribbon")
export class CadRibbon extends LitElement {
  static styles = [base, css`
    :host { display: flex; background: #f9fafc; border-bottom: 1px solid #a9b9b9; }
    .group { display: flex; flex-direction: column; margin: 0 0 2px; padding: 0 7px; border-right: 1px solid #b3babd; border-image: linear-gradient(transparent 2px, #b3babd 2px) 1; }
    .cols { flex: 1; display: flex; justify-content: center; gap: 8px; }
    .stack { display: grid; grid-template-rows: repeat(3, 27px); justify-items: start; }
    .cmd { gap: 4px; white-space: nowrap; }
    .cmd .arrow { margin-left: 3px; }
    .large { flex-direction: column; justify-content: flex-start; min-width: 34px; padding-top: 5px; }
    .large .ico { margin-bottom: 9px; }
    .large .arrow { margin-top: 4px; }
    .label { gap: 3px; align-self: center; height: 23px; padding-top: 4px; white-space: nowrap; }
  `];

  private large(b: Large): TemplateResult {
    return html`<button class="large">${icon(b.big.join(" "), 32)}${b.big.map((l) => html`<span>${l}</span>`)}${b.menu ? arrow : nothing}</button>`;
  }

  private stack(items: Command[]): TemplateResult {
    return html`<div class="stack">${items.map((i) => html`
      <button class=${classMap({ cmd: true, off: !!i.off })} ?disabled=${i.off}>${icon(i.t)}<span>${i.t}</span>${i.menu ? arrow : nothing}</button>`)}</div>`;
  }

  render() {
    return RIBBON.map((g) => html`<section class="group" aria-label=${g.label}>
      <div class="cols">${g.cols.map((col) => (Array.isArray(col) ? this.stack(col) : this.large(col)))}</div>
      <button class="label">${g.label}${arrow}</button>
    </section>`);
  }
}

/* ---------- model tree ---------- */
type Cell = "line" | "tee" | "end" | "open" | "closed" | "none" | "open-last";
interface Row { t: string; i: string; cells: Cell[]; dim?: boolean; }
const leaf = (t: string, i: string, dim = false): Row => ({ t, i, cells: ["tee"], dim });
const node = (t: string, i: string): Row => ({ t, i, cells: ["closed"] });
const ROWS: Row[] = [
  { t: "C12_B03891_D1_V1_S.PRT", i: "part", cells: [] },
  { t: "Design Items", i: "list", cells: ["open"] },
  { t: "Bodies (22)", i: "bodies", cells: ["line", "closed"] },
  { t: "Annotations", i: "annotations", cells: ["line", "open-last"] },
  { t: "gp1", i: "gtol", cells: ["line", "none", "end"] },
  leaf("RIGHT", "plane", true), leaf("TOP", "plane", true), leaf("FRONT", "plane", true),
  leaf("PRT_CSYS_DEF", "csys"), node("Extrude 1", "extrude"), node("Extrude 1", "extrude"),
  leaf("Intersect 1", "intersectOff", true), leaf("Divide Surface 1", "divide"), leaf("Round 2", "round"),
  node("Pattern 3 of Copy Geometry", "pattern"), leaf("Body Merge 1", "merge"), leaf("Edit Round 1", "editRound"),
  leaf("Round 3", "round"), node("Extrude 2", "extrude"), leaf("Chamfer 1", "chamfer"),
  node("Pattern 2 of Copy Geometry", "pattern"), leaf("Offset Geometry 1", "offsetGeo"), leaf("Move 1", "move"),
  node("Pattern 4 of Extrude 3", "pattern"), leaf("Reference 1", "reference"),
  { t: "Move 2", i: "move", cells: ["end"] },
];

const LINES: Record<Cell, Art> = {
  none: svg``,
  line: svg`<path d="M8.500 0v18"/>`,
  tee: svg`<path d="M8.500 0v18M8 9.500h9"/>`,
  end: svg`<path d="M8.500 0v9.500h8"/>`,
  open: svg`<path d="M8.500 1v4M8.500 13v5"/><path class="tri" d="M5 7.500h7.500L8.700 11z"/>`,
  "open-last": svg`<path d="M8.500 0v4"/><path class="tri" d="M5 7.500h7.500L8.700 11z"/>`,
  closed: svg`<path d="M8.500 0v3M8.500 15v3"/><path class="tri" d="M6.500 5v8l4-4z"/>`,
};

@customElement("model-tree")
export class ModelTree extends LitElement {
  static styles = [base, css`
    :host { display: flex; flex-direction: column; background: #f8faf9; border-right: 3px solid #d8dfe0; font-family: "Open Sans", "Noto Sans", sans-serif; }
    .tabs { display: flex; height: 26px; background: #dae0e0; }
    .tabs button { width: 32px; }
    .tabs .on { background: #f8faf9; }
    .tools { display: flex; align-items: center; height: 33px; padding: 0 0 1px 7px; }
    .tools button { width: 24px; height: 24px; }
    .grip { width: 2px; height: 16px; margin: 0 15px 0 1px; background: repeating-linear-gradient(#a9acad 0 2px, transparent 2px 4px); }
    .sep { width: 1px; height: 24px; margin: 0 4px; background: #a9acad; }
    .tail { margin-left: 5px; }
    .find { display: flex; align-items: center; height: 25px; padding: 0 10px 0 12px; }
    .find label { margin-right: 4px; }
    .field { flex: 1; display: flex; align-items: center; height: 27px; border: 1px solid #a1a8aa; background: #fff; padding-right: 5px; }
    .field input { flex: 1; min-width: 0; height: 100%; border: 0; outline: 0; background: none; font: inherit; padding: 0 6px; }
    .field svg { display: block; }
    .drop { margin: 0 9px 0 6px; }
    .head { height: 21px; margin: 6px 5px 0 8px; border: solid #cfd4d5; border-width: 0 1px 1px 0; }
    ul { list-style: none; margin: 0; padding: 0 5px 0 11px; }
    li { display: flex; align-items: center; height: 18px; white-space: nowrap; }
    li .ico { margin-right: 5px; }
    .cell { flex: none; width: 20px; height: 18px; fill: none; stroke: #b3b8ba; }
    .cell .tri { fill: #4d5154; stroke: none; }
    .dim { color: #b9b09c; }
    .insert { height: 6px; margin: 4px 5px 0 11px; display: flex; align-items: center; }
    .insert::before, .insert::after { content: ""; border: solid transparent; border-width: 3px 0; }
    .insert::before { border-left: 3px solid #6cb851; }
    .insert::after { border-right: 3px solid #6cb851; }
    .insert i { flex: 1; height: 2px; background: #6cb851; }
  `];

  private tool(name: string, label: string, cls = "") {
    return html`<button class=${cls} aria-label=${label}>${icon(name)}</button>`;
  }

  render() {
    return html`
      <div class="tabs">
        <button class="on" aria-label="Model Tree">${icon("treeTab")}</button>
        <button aria-label="Folder Browser">${icon("folders")}</button>
      </div>
      <div class="tools">
        ${this.tool("greenCube", "Model")}<span class="grip"></span>
        ${this.tool("collapse", "Collapse")}${this.tool("expand", "Expand")}${this.tool("columns", "Columns")}
        <span class="sep"></span>${this.tool("star", "New group")}<span class="sep"></span>
        ${this.tool("treeFilter", "Tree filters")}${this.tool("columnDoc", "Tree columns")}<span class="sep"></span>
        ${this.tool("list", "Design items")}${this.tool("layers", "Layers")}${this.tool("treePick", "Select")}${this.tool("treeBody", "Bodies")}
        ${this.tool("report", "Reports", "tail")}
      </div>
      <div class="find">
        <label for="q" aria-label="Filter">${icon("funnel")}</label>
        <div class="field"><input id="q" type="text" />
          <button aria-label="Clear"><svg width="8" height="8" viewBox="0 0 8 8"><path d="M.5.5l7 7M7.500.5l-7 7" stroke="#85898b" stroke-width="1.2"/></svg></button></div>
        <button class="drop" aria-label="Filter options">${arrow}</button>
        <button aria-label="Add">${icon("plus")}</button>
      </div>
      <div class="head"></div>
      <ul>${ROWS.map((r) => html`<li class=${classMap({ dim: !!r.dim })}>
        ${r.cells.map((k) => html`<svg class="cell" viewBox="0 0 20 18">${LINES[k]}</svg>`)}${icon(r.i)}<span>${r.t}</span></li>`)}</ul>
      <div class="insert"><i></i></div>`;
  }
}

/* ---------- graphics area ---------- */
const STEP = [100.94, 19.11];
const VIEW_TOOLS: [string, string][] = [
  ["zoomFit", "Refit"], ["zoomIn", "Zoom In"], ["zoomOut", "Zoom Out"], ["repaint", "Repaint"], ["shade", "Shading"],
  ["display", "Display Style"], ["simplify", "Simplify"], ["hidden", "Show edges"], ["views", "Saved Orientations"],
  ["capture", "View Manager"], ["perspective", "Perspective"], ["section", "Sections"], ["datum", "Datum Display"],
  ["annotate", "Annotation Display"], ["spin", "Spin Center"], ["warn", "Simulate"], ["pause", "Pause"], ["present", "Present"],
];
const PRESSED = new Set(["hidden", "annotate"]);
const FLYOUT = new Set(["shade", "display", "views", "section", "datum"]);

@customElement("model-view")
export class ModelView extends LitElement {
  static styles = [base, css`
    :host { display: block; position: relative; min-width: 0; background: linear-gradient(#e9e9ee, #e6e9ec); overflow: hidden; }
    .scene { display: block; width: 100%; height: 100%; }
    .bar { position: absolute; top: 7px; left: 50%; transform: translateX(-50%); display: flex; gap: 4px; padding: 3px 4px; background: #f9fafb; border: 1px solid #9da1a4; }
    .bar button { width: 22px; height: 23px; border: 1px solid transparent; }
    .bar .on { background: #dcdddf; border-color: #aeb1b3; }
    .edge { stroke: #121111; stroke-width: 0.8; stroke-linejoin: round; }
    .thin { stroke: #121111; stroke-width: 0.7; fill: none; }
    .gtol { font: 23px "Liberation Sans", Arial, sans-serif; fill: #32105c; stroke: #32105c; stroke-width: 0.6; }
    .leader { fill: none; stroke: #3b2a63; stroke-width: 0.8; }
  `];

  /** Rounded front face of a divider wall. */
  private wall(): Art {
    return svg`<path class="edge" fill="url(#wall)" d="M537.7 649.700 542.3 543.300C543 512 550 492 563.700 481L578.700 483C564 496 558 516 557.300 545.700L553.700 651.700z"/>
      <path class="thin" d="M542.3 543.300 557.300 545.700"/>`;
  }

  private bay(k: number): Art {
    return svg`<g transform="translate(${k * STEP[0]} ${k * STEP[1]})">
      <path class="edge" fill="#474543" d="M593.3 476 668.300 489.300Q672.500 490.500 671 492.800L650 512 640 642 591 632.700 588 628.500z"/>
      <path class="thin" d="M667.500 490 666.500 494.500 660 501"/>
      <path fill="#ffff00" d="M600 485 658.300 496.700 656.500 510 650 522 597 512.700z"/>
      <path d="M600 485.200 658.300 496.800" stroke="#1c1c14" stroke-width="1.1"/>
      <path fill="#eeee00" d="M597 512.700 650 522 645 560 641 642 591 632.700z"/>
      <path class="thin" d="M600 485 597 512.700 591 632.700 641 642M597 512.700 650 522"/>
      <circle cx="624" cy="561.8" r="12.4" fill="#d9d900" class="edge"/>
      <path d="M614.300 554.500C617 549 624 547.500 630 551.500 636 556 638 564 635 568.500 632 572 625 572.500 619.500 568.500 614.500 564.500 612.500 559 614.300 554.500z" fill="url(#bore)"/>
      <path class="edge" fill="#3a3837" d="M585 476.700Q589 474.500 593.300 476L591 632.700 589 628.700 580.300 628.300z"/>
      <path d="M587 479 582.500 627" stroke="#4f4c4a" stroke-width="2.2"/>
      <path class="thin" d="M589.500 476 586.500 628"/>
      <path class="edge" fill="#2b282a" d="M553.700 651.700 557.300 545.700C558 516 564 496 578.700 483L585 476.700 579.700 629z"/>
      ${this.wall()}</g>`;
  }

  /** Outline of the rear rim: one lug per divider. */
  private rim(): string {
    let d = "M563.7 481 624 425.500Q626.700 423.500 630 424.200";
    for (let k = 0; k < 10; k++) {
      const x = k * STEP[0], y = k * STEP[1];
      const p = (a: number, b: number) => `${(a + x).toFixed(1)} ${(b + y).toFixed(1)}`;
      d += `L${p(636, 425)}Q${p(640.5, 426.5)} ${p(639, 428.5)}L${p(634, 433)}Q${p(632.5, 436)} ${p(638, 437.5)}L${p(711, 451.8)}Q${p(715.5, 452.5)} ${p(718.5, 449.8)}L${p(724.5, 445)}Q${p(728.5, 442.5)} ${p(733, 443.3)}`;
    }
    return d + "L1651.7 618 1588.1 674 1566 720 560 530z";
  }

  render() {
    const lugs = Array.from({ length: 10 }, (_, k) => k);
    return html`
      <svg class="scene" viewBox="353 162 1567 884" role="img" aria-label="Terminal block part">
        <defs>
          <linearGradient id="wall" gradientUnits="userSpaceOnUse" x1="560" y1="480" x2="546" y2="548">
            <stop offset="0" stop-color="#3d3b3a"/><stop offset=".3" stop-color="#454342"/><stop offset=".68" stop-color="#75716f"/><stop offset=".95" stop-color="#4a4847"/><stop offset="1" stop-color="#4c4a49"/>
          </linearGradient>
          <linearGradient id="bore"><stop offset="0" stop-color="#2c2a2a"/><stop offset="1" stop-color="#656160"/></linearGradient>
        </defs>
        ${lugs.map((k) => svg`<path transform="translate(${k * STEP[0]} ${k * STEP[1]})" class="edge" fill="#8f8e86" d="M640 427V438l-5-1-3-3z"/>`)}
        <path class="edge" fill="#4a4845" d=${this.rim()}/>
        ${lugs.map((k) => this.bay(k))}
        <path class="edge" fill="#2b282a" d="M1651.700 618 1645 770.700 1563.100 842.800 1566.700 736.800C1567.400 707 1573.400 687 1588.100 674z"/>
        <g transform="translate(${10 * STEP[0]} ${10 * STEP[1]})">${this.wall()}</g>
        <path class="leader" d="M413.3 337 512.700 355.700 511.300 387.700 411.300 368.700zM470.300 348 469 379.700M512.300 372.300 535 375.700 622.700 435.700"/>
        <text class="gtol" transform="translate(462 370) rotate(10.6) scale(-1 1)">0.02</text>
        <path d="M478.700 369.500C480 357 499 360 500.300 373.500z" fill="none" stroke="#32105c" stroke-width="2"/>
      </svg>
      <div class="bar" role="toolbar">${VIEW_TOOLS.map(([n, l]) => html`<button class=${classMap({ on: PRESSED.has(n) })} aria-label=${l}>
        <svg class="ico" width="16" height="16" viewBox="0 0 16 16">${I[n]}${FLYOUT.has(n) ? svg`<path d="M17.500 14.500v3h-3z" fill="#444"/>` : nothing}</svg></button>`)}</div>`;
  }
}

/* ---------- application frame ---------- */
const TABS = ["Model", "Analysis", "Live Simulation", "Annotate", "Tools", "View", "Flexible Modeling", "Applications"];
const QUICK: [string, string, boolean?][] = [
  ["new", "New"], ["open", "Open"], ["save", "Save"], ["undo", "Undo", true], ["redo", "Redo", true], ["regen", "Erase"],
  ["erase", "Erase Not Displayed"], ["brackets", "Parameters"], ["d=", "Relations"], ["sphere", "Appearance", true], ["regenTree", "Regenerate"],
  ["windows", "Windows", true], ["closeWin", "Close"], ["pick", "Selection", true],
];

@customElement("app-root")
export class AppRoot extends LitElement {
  static styles = [base, css`
    :host { display: grid; grid-template-rows: 28px 27px auto 1fr auto; height: 100vh; background: #fff; }
    header { display: grid; grid-template-columns: 1fr auto 1fr; align-items: center; background: #dae0df; }
    .quick { display: flex; align-items: center; height: 28px; padding-left: 8px; }
    .quick button { width: 24px; height: 24px; }
    .quick .menu { width: 14px; }
    .brand { font-size: 18px; font-weight: 500; line-height: 20px; color: #4b4f52; margin: 0 14px 3px 5px; display: flex; }
    .brand small { font-size: 9px; line-height: 15px; }
    .rel { font-weight: 700; font-size: 14px; }
    .vr { width: 1px; height: 24px; background: #a5abac; margin: 0 5px 0 0; }
    h1 { font-size: 12px; font-weight: 400; margin: 0; padding-top: 1px; }
    .win { display: flex; justify-content: flex-end; gap: 12px; padding-right: 8px; }
    nav { display: flex; background: #3e454b; color: #fff; font-size: 12px; }
    nav .tab { padding: 1px 24px 0; }
    nav .file { padding: 1px 20px 0; background: linear-gradient(100deg, #5fc63c, #4fa836); }
    nav .on { background: #f9fafc; color: #3b8c22; }
    .help { margin-left: auto; display: flex; align-items: center; gap: 7px; padding: 0 4px 2px 0; }
    .help .arrow { color: #fff; margin: 0 4px 0 0; }
    .help b { width: 16px; text-align: center; font-size: 13px; }
    main { display: grid; grid-template-columns: 353px minmax(0, 1fr); min-height: 0; }
    footer { display: flex; align-items: center; height: 34px; padding: 0 18px 1px 6px; background: #f8faf9; border-top: 1px solid #a9b9b9; border-bottom: 1px solid #e3e5e5; font-family: "Open Sans", "Noto Sans", sans-serif; }
    footer button { height: 24px; width: 22px; margin-right: 4px; }
    footer .on { background: #e0e2e2; border: 1px solid #b3b6b7; }
    footer .bar { width: 1px; height: 26px; background: #a9acad; margin: 0 4px 0 0; }
    footer .lead { margin-left: 5px; }
    .dot { width: 5px; height: 5px; border-radius: 50%; background: #15678f; margin: 0 6px 0 2px; }
    .msg { flex: 1; }
    footer .split { margin-right: 0; }
    footer .pull { width: 14px; }
    .kind { position: relative; display: flex; margin-left: 86px; }
    select { appearance: none; width: 165px; height: 23px; font: inherit; font-size: 12px; color: inherit; background: #f9fafa; border: 1px solid #9fa4a6; border-radius: 0; padding: 0 24px 0 7px; }
    .kind span { position: absolute; right: 0; top: 0; width: 16px; height: 23px; display: flex; align-items: center; justify-content: center; border-left: 1px solid #9fa4a6; pointer-events: none; }
  `];

  render() {
    return html`
      <header>
        <div class="quick">
          ${icon("cube")}<span class="brand">creo<small>°</small></span>
          ${QUICK.map(([n, l, menu]) => html`<button aria-label=${l}>${n === "d=" ? html`<span class="rel">d=</span>` : icon(n)}</button>${menu ? html`<button class="menu" aria-label="${l} options">${arrow}</button>` : nothing}`)}
          <span class="vr"></span>
          <button class="menu" aria-label="Customize"><svg width="9" height="8" viewBox="0 0 9 8"><path d="M0 .5h9" stroke="#333"/><path d="M.5 2.500h8l-4 4.500z" fill="#333"/></svg></button>
        </div>
        <h1>C12_B03891_D1_V1_S (Active) - Creo Parametric</h1>
        <div class="win">
          <button aria-label="Minimize"><svg width="16" height="16" viewBox="0 0 16 16"><path d="M4 10.500h9" stroke="#6b6f71" stroke-width="1.8"/></svg></button>
          <button aria-label="Restore"><svg width="16" height="16" viewBox="0 0 16 16"><path d="M5.500 7V3.500h8v6H10M2.500 7h7.500v5H2.500z" fill="none" stroke="#6b6f71" stroke-width="1.4"/></svg></button>
          <button aria-label="Close"><svg width="16" height="16" viewBox="0 0 16 16"><path d="M4 4l8 8M12 4l-8 8" stroke="#6b6f71" stroke-width="2"/></svg></button>
        </div>
      </header>
      <nav>
        <button class="file">File</button>
        ${TABS.map((t, i) => html`<button class=${classMap({ tab: true, on: i === 0 })}>${t}</button>`)}
        <div class="help">
          <button aria-label="Minimize ribbon"><svg width="16" height="16" viewBox="0 0 16 16"><path d="M2 9.500l6-6 6 6h-3.500L8 7.500 5.500 9.500z" fill="#fff"/></svg></button>
          <button aria-label="Search"><svg width="16" height="16" viewBox="0 0 16 16"><circle cx="9.5" cy="6.5" r="3.5" fill="none" stroke="#fff" stroke-width="1.5"/><path d="M7 9.500 3.500 13" stroke="#fff" stroke-width="2"/></svg></button>
          <button aria-label="Learning"><svg width="16" height="16" viewBox="0 0 16 16"><path d="M2 6l6-3 6 3-6 3z" fill="#fff"/><path d="M4.500 8.500V12q3.500 2 7 0V8.500L8 10.500zM3 7v5" fill="#fff" stroke="#fff" stroke-width=".8"/></svg></button>
          ${arrow}
          <button aria-label="Help"><b>?</b></button>
        </div>
      </nav>
      <cad-ribbon></cad-ribbon>
      <main><model-tree></model-tree><model-view></model-view></main>
      <footer>
        <button class="on" aria-label="Show navigator">${icon("paneEye")}</button>
        <button aria-label="Browser">${icon("globe")}</button>
        <button aria-label="Full screen">${icon("blankWin")}</button>
        <span class="bar lead"></span>
        <i class="dot"></i><span class="msg" role="status">C12_B03891_D1_V1_S regeneration completed successfully.</span>
        <span class="bar"></span><span class="bar"></span>
        <button class="split" aria-label="Find">${icon("binoculars")}</button><button class="pull" aria-label="Find options">${arrow}</button>
        <span class="bar"></span>
        <button class="split" aria-label="Box select">${icon("dashBox")}</button><button class="pull" aria-label="Selection options">${arrow}</button>
        <button aria-label="Preselect">${icon("pickEye")}</button>
        <div class="kind"><select aria-label="Selection filter"><option>Geometry</option><option>Feature</option></select><span>${arrow}</span></div>
      </footer>`;
  }
}
